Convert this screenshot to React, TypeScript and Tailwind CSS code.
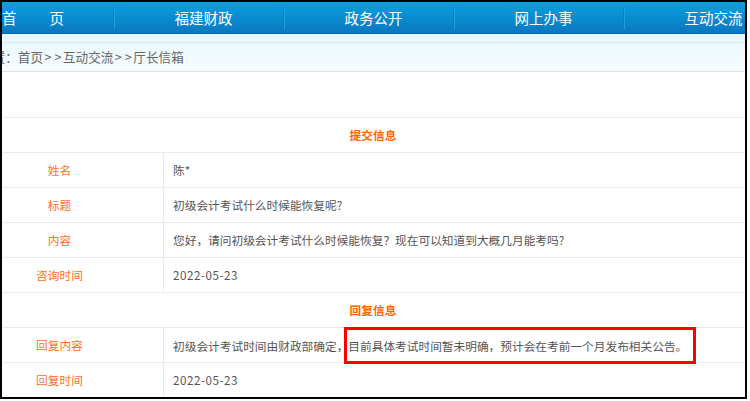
import React from "react";

const navItems = ["福建财政", "政务公开", "网上办事", "互动交流"];

function Row({ label, children }: { label: string; children: React.ReactNode }) {
  return (
    <div className="flex h-[35px] border-b border-[#ebebeb]">
      <div className="w-[208px] shrink-0 flex items-center justify-center border-r border-[#ebebeb] text-[#ff6d1f]">
        {label}
      </div>
      <div className="flex-1 flex items-center pl-[9px] text-[#555555]">{children}</div>
    </div>
  );
}

function Header({ title }: { title: string }) {
  return (
    <div className="flex h-[35px] border-b border-[#ebebeb] items-center justify-center font-bold text-[#ff6600]">
      {title}
    </div>
  );
}

function Gt() {
  return (
    <>
      <span className="inline-block w-[10px] text-center">&gt;</span>
      <span className="inline-block w-[10px] text-center">&gt;</span>
    </>
  );
}

export default function App() {
  return (
    <div
      className="w-[750px] h-[401px] bg-white overflow-hidden"
      style={{ fontFamily: '"Noto Sans CJK SC", "Noto Sans", sans-serif' }}
    >
      <div className="w-[747px] h-[399px] border-2 border-black overflow-hidden flex flex-col">
        {/* nav */}
        <div className="h-[32px] shrink-0 bg-gradient-to-b from-[#0aa0e0] to-[#0b78c0] border-b border-[#0a6aac] flex items-center text-white text-[14.5px]">
          <div className="w-[170px] shrink-0 ml-[-59px] pl-[10px] flex items-center justify-center gap-[33px]">
            <span>首</span>
            <span>页</span>
          </div>
          {navItems.map((t) => (
            <div key={t} className="w-[170px] shrink-0 flex items-center h-full">
              <div className="w-px h-[22px] bg-[#0a7cbc] shadow-[1px_0_0_#22a2dc]" />
              <div className="flex-1 text-center pl-[10px]">{t}</div>
            </div>
          ))}
        </div>
        {/* breadcrumb */}
        <div className="h-[9px] shrink-0 bg-[#e8f8fd] border-b border-[#d9e9ef]" />
        <div className="h-[29px] shrink-0 bg-gradient-to-b from-[#eaf8fd] to-[#f7fcfe] border-b border-[#e3e3e3] flex items-center text-[12.6px] text-[#666666]">
          <span className="ml-[-22px] whitespace-nowrap">
            位置：首页<Gt />互动交流<Gt />厅长信箱
          </span>
        </div>
        {/* spacer */}
        <div className="h-[46px] shrink-0 border-b border-[#ebebeb]" />
        {/* table */}
        <div className="w-[834px] ml-[-46px] shrink-0 text-[11.7px]">
          <Header title="提交信息" />
          <Row label="姓名">陈*</Row>
          <Row label="标题">初级会计考试什么时候能恢复呢?</Row>
          <Row label="内容">您好，请问初级会计考试什么时候能恢复？现在可以知道到大概几月能考吗?</Row>
          <Row label="咨询时间">
            <span className="tracking-[0.5px]">2022-05-23</span>
          </Row>
          <Header title="回复信息" />
          <Row label="回复内容">
            <span className="leading-[17px] whitespace-nowrap">
              初级会计考试时间由财政部确定，
              <span className="relative">
                目前具体考试时间暂未明确，预计会在考前一个月发布相关公告。
                <span className="absolute left-[-4px] right-[-9px] top-[-10px] bottom-[-10px] border-[3px] border-[#ff0000]" />
              </span>
            </span>
          </Row>
          <Row label="回复时间">
            <span className="tracking-[0.5px]">2022-05-23</span>
          </Row>
        </div>
      </div>
    </div>
  );
}
